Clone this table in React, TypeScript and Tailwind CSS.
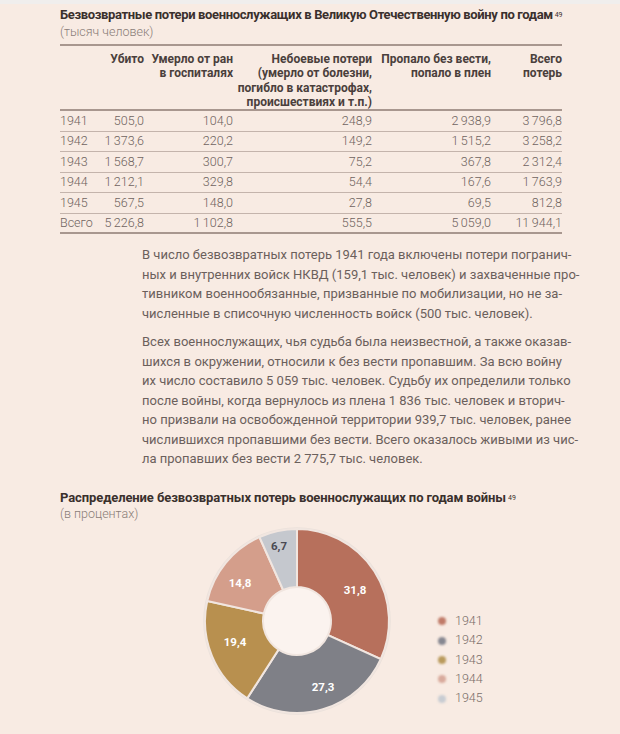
const rows = [
  ['1941', '505,0', '104,0', '248,9', '2\u2009938,9', '3\u2009796,8'],
  ['1942', '1\u2009373,6', '220,2', '149,2', '1\u2009515,2', '3\u2009258,2'],
  ['1943', '1\u2009568,7', '300,7', '75,2', '367,8', '2\u2009312,4'],
  ['1944', '1\u2009212,1', '329,8', '54,4', '167,6', '1\u2009763,9'],
  ['1945', '567,5', '148,0', '27,8', '69,5', '812,8'],
  ['Всего', '5\u2009226,8', '1\u2009102,8', '555,5', '5\u2009059,0', '11\u2009944,1'],
]

const p1 = [
  'В число безвозвратных потерь 1941 года включены потери погранич-',
  'ных и внутренних войск НКВД (159,1 тыс. человек) и захваченные про-',
  'тивником военнообязанные, призванные по мобилизации, но не за-',
  'численные в списочную численность войск (500 тыс. человек).',
]

const p2 = [
  'Всех военнослужащих, чья судьба была неизвестной, а также оказав-',
  'шихся в окружении, относили к без вести пропавшим. За всю войну',
  'их число составило 5 059 тыс. человек. Судьбу их определили только',
  'после войны, когда вернулось из плена 1 836 тыс. человек и вторич-',
  'но призвали на освобожденной территории 939,7 тыс. человек, ранее',
  'числившихся пропавшими без вести. Всего оказалось живыми из чис-',
  'ла пропавших без вести 2 775,7 тыс. человек.',
]

const slices = [
  { year: '1941', v: 31.8, color: '#b7705c', dot: '#c07b69', label: '31,8', lx: 156, ly: 67, dark: false },
  { year: '1942', v: 27.3, color: '#7f8087', dot: '#868790', label: '27,3', lx: 124, ly: 164, dark: false },
  { year: '1943', v: 19.4, color: '#b8904f', dot: '#b99a5c', label: '19,4', lx: 36, ly: 119, dark: false },
  { year: '1944', v: 14.8, color: '#d49e8b', dot: '#d8aa9c', label: '14,8', lx: 41, ly: 60, dark: false },
  { year: '1945', v: 6.7, color: '#c5c8ce', dot: '#c8ccd2', label: '6,7', lx: 80, ly: 23, dark: true },
]

function arc(a0: number, a1: number) {
  const c = 98
  const R = 92
  const r = 34
  const pt = (a: number, rad: number) => {
    const t = (a * Math.PI) / 180
    return `${(c + rad * Math.sin(t)).toFixed(2)} ${(c - rad * Math.cos(t)).toFixed(2)}`
  }
  const large = a1 - a0 > 180 ? 1 : 0
  return `M ${pt(a0, R)} A ${R} ${R} 0 ${large} 1 ${pt(a1, R)} L ${pt(a1, r)} A ${r} ${r} 0 ${large} 0 ${pt(a0, r)} Z`
}

function Donut() {
  let acc = 0
  return (
    <svg width="196" height="196" viewBox="0 0 196 196" className="shrink-0">
      <circle cx="98" cy="98" r="92.5" fill="none" stroke="#ebe1db" strokeWidth="2.5" />
      <circle cx="98" cy="98" r="34" fill="#fbf3ef" />
      {slices.map((s) => {
        const a0 = (acc / 100) * 360
        acc += s.v
        const a1 = (acc / 100) * 360
        return <path key={s.year} d={arc(a0, a1)} fill={s.color} stroke="#f1e6e0" strokeWidth="2" />
      })}
      {slices.map((s) => (
        <text
          key={s.label}
          x={s.lx}
          y={s.ly}
          textAnchor="middle"
          dominantBaseline="central"
          fontSize="11.5"
          fontWeight="700"
          fill={s.dark ? '#4a4a52' : '#ffffff'}
        >
          {s.label}
        </text>
      ))}
    </svg>
  )
}

export default function App() {
  return (
    <div className="w-[620px] h-[734px] overflow-hidden bg-[#f8ebe3] font-['Roboto',sans-serif]">
      <div className="h-[4px] bg-[#f0eeed]" />
      <div className="pl-[60px]">
        <h1 className="mt-[3px] text-[13px] leading-[16px] font-bold text-[#3a302d] tracking-[-0.35px]">
          Безвозвратные потери военнослужащих в Великую Отечественную войну по годам
          <sup className="text-[7px] font-normal ml-[2px] relative -top-[2px]">49</sup>
        </h1>
        <div className="mt-[1px] text-[12.5px] leading-[16px] text-[#8a7d78] font-light">(тысяч человек)</div>

        <div className="mt-[4px] w-[502px] border-t-2 border-[#a8978f]">
          <div className="grid grid-cols-[40px_44px_89px_139px_119px_71px] pt-[6px] border-b-2 border-[#a8978f] text-[12px] leading-[14.3px] font-bold text-[#4a3f3c] text-right">
            <div />
            <div>Убито</div>
            <div>
              Умерло от ран
              <br />в госпиталях
            </div>
            <div>
              Небоевые потери
              <br />
              (умерло от болезни,
              <br />
              погибло в катастрофах,
              <br />
              происшествиях и т.п.)
            </div>
            <div>
              Пропало без вести,
              <br />
              попало в плен
            </div>
            <div>
              Всего
              <br />
              потерь
            </div>
          </div>
          {rows.map((r, i) => (
            <div
              key={r[0]}
              className={`grid grid-cols-[40px_44px_89px_139px_119px_71px] h-[20.5px] items-center text-[12.5px] font-light text-[#6f6360] text-right ${
                i === rows.length - 1 ? 'border-b-2 border-[#a8978f]' : 'border-b border-[#c4b4ac]'
              }`}
            >
              <div className="text-left">{r[0]}</div>
              <div>{r[1]}</div>
              <div>{r[2]}</div>
              <div>{r[3]}</div>
              <div>{r[4]}</div>
              <div>{r[5]}</div>
            </div>
          ))}
        </div>

        <div className="ml-[82px] w-[420px] mt-[11px] text-[13px] leading-[19.5px] text-[#6b605c]">
          <div>
            {p1.map((l, i) => (
              <div key={i} className={`whitespace-nowrap ${i < p1.length - 1 ? '[text-align-last:justify] text-justify' : ''}`}>
                {l}
              </div>
            ))}
          </div>
          <div className="mt-[9px]">
            {p2.map((l, i) => (
              <div key={i} className={`whitespace-nowrap ${i < p2.length - 1 ? '[text-align-last:justify] text-justify' : ''}`}>
                {l}
              </div>
            ))}
          </div>
        </div>

        <h2 className="mt-[20px] text-[13px] leading-[17px] font-bold text-[#3a302d] tracking-[-0.1px]">
          Распределение безвозвратных потерь военнослужащих по годам войны
          <sup className="text-[7px] font-normal ml-[2px] relative -top-[2px]">49</sup>
        </h2>
        <div className="text-[12.5px] leading-[16px] text-[#8a7d78] font-light">(в процентах)</div>

        <div className="flex items-start mt-[1px] ml-[139px]">
          <Donut />
          <div className="ml-[43px] mt-[89px] flex flex-col">
            {slices.map((s) => (
              <div key={s.year} className="flex items-center h-[19.3px]">
                <span className="w-[8px] h-[8px] rounded-full blur-[0.8px]" style={{ backgroundColor: s.dot }} />
                <span className="ml-[9px] text-[12.5px] font-light text-[#7a6e6a]">{s.year}</span>
              </div>
            ))}
          </div>
        </div>
      </div>
    </div>
  )
}
